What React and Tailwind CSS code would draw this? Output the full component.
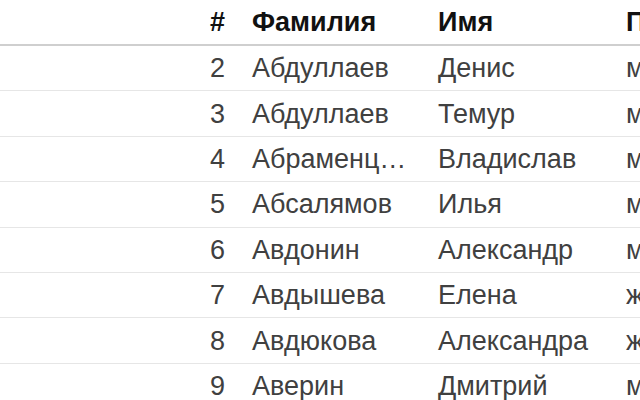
import React from "react";

const rows = [
  ["2", "Абдуллаев", "Денис", "м"],
  ["3", "Абдуллаев", "Темур", "м"],
  ["4", "Абраменцев", "Владислав", "м"],
  ["5", "Абсалямов", "Илья", "м"],
  ["6", "Авдонин", "Александр", "м"],
  ["7", "Авдышева", "Елена", "ж"],
  ["8", "Авдюкова", "Александра", "ж"],
  ["9", "Аверин", "Дмитрий", "м"],
];

export default function App() {
  return (
    <div
      className="w-[640px] h-[400px] overflow-hidden bg-white text-[27px] leading-[32px]"
      style={{ fontFamily: '"Liberation Sans", Arial, sans-serif' }}
    >
      <div className="flex h-[46px] items-center border-b-2 border-[#cfcfcf] font-bold text-[#111]">
        <div className="w-[190px] shrink-0" />
        <div className="w-[49px] shrink-0 pr-[14px] text-right">#</div>
        <div className="w-[185px] shrink-0 pl-[13px]">Фамилия</div>
        <div className="w-[188px] shrink-0 pl-[14px]">Имя</div>
        <div className="min-w-0 flex-1 overflow-hidden pl-[14px] whitespace-nowrap">Пол</div>
      </div>
      {rows.map((r) => (
        <div
          key={r[0]}
          className="flex h-[45.4px] items-center border-b border-[#e6e6e6] text-[#404040]"
        >
          <div className="w-[190px] shrink-0" />
          <div className="w-[49px] shrink-0 pr-[14px] text-right">{r[0]}</div>
          <div className="w-[185px] shrink-0 pl-[13px] pr-[17px] truncate">{r[1]}</div>
          <div className="w-[188px] shrink-0 pl-[14px] whitespace-nowrap">{r[2]}</div>
          <div className="min-w-0 flex-1 overflow-hidden pl-[14px] whitespace-nowrap">{r[3]}</div>
        </div>
      ))}
    </div>
  );
}
